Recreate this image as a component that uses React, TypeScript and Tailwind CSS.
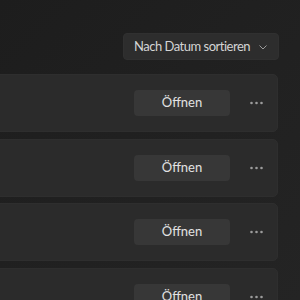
import React from 'react';

const rows = [0, 1, 2, 3];

const Dots = () => (
  <svg width="13" height="4" viewBox="0 0 13 4" className="text-[#9c9c9c]">
    <circle cx="1.5" cy="2" r="1.3" fill="currentColor" />
    <circle cx="6.5" cy="2" r="1.3" fill="currentColor" />
    <circle cx="11.5" cy="2" r="1.3" fill="currentColor" />
  </svg>
);

export default function App() {
  return (
    <div
      className="w-[300px] h-[300px] overflow-hidden bg-gradient-to-br from-[#1d1d1d] to-[#242424]"
      style={{ fontFamily: 'Lato, "Noto Sans", sans-serif' }}
    >
      {/* Sort control */}
      <div className="flex justify-end pt-[33px] pr-[21px]">
        <button className="flex items-center h-[27px] pl-[10px] pr-[11px] rounded-[4px] bg-[#2d2d2d] border border-[#303030] text-[13px] tracking-[-0.5px] text-[#d4d4d4]">
          <span>Nach Datum sortieren</span>
          <svg width="8" height="5" viewBox="0 0 8 5" className="ml-[9px] mt-[1px]">
            <path d="M0.5 0.5 L4 4 L7.5 0.5" stroke="#9a9a9a" strokeWidth="1" fill="none" />
          </svg>
        </button>
      </div>

      {/* List */}
      <div className="flex flex-col gap-[6.5px] mt-[14px] -ml-[8px] mr-[22px]">
        {rows.map((r) => (
          <div
            key={r}
            className="h-[58px] shrink-0 flex items-center justify-end pr-[14px] rounded-[5px] bg-[#2b2b2b] border border-[#2e2e2e]"
          >
            <button className="w-[96px] h-[26px] rounded-[4px] bg-[#373737] text-[13px] text-[#e2e2e2]">
              Öffnen
            </button>
            <div className="ml-[20px] flex items-center">
              <Dots />
            </div>
          </div>
        ))}
      </div>
    </div>
  );
}
